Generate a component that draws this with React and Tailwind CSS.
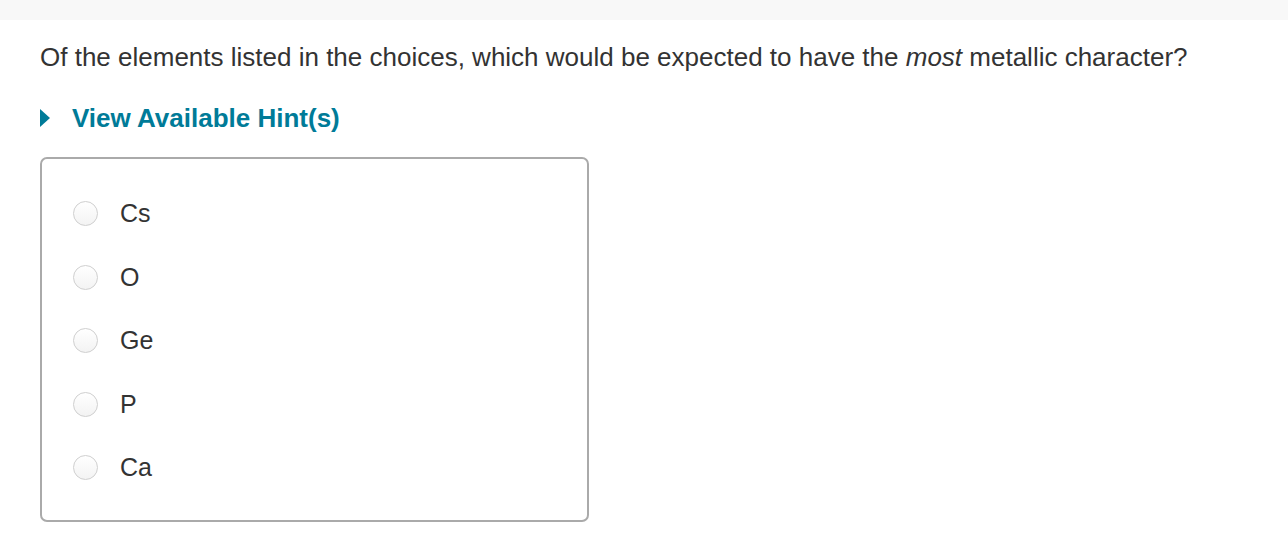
export default function App() {
  const choices = ["Cs", "O", "Ge", "P", "Ca"];

  return (
    <div className="w-[1288px] h-[534px] bg-white text-[#333] font-['Liberation_Sans',Arial,sans-serif]">
      <div className="h-[20px] bg-[#f8f8f8]" />

      <div className="pl-[40px] pt-[20px]">
        <p className="text-[26px] leading-[34px]">
          Of the elements listed in the choices, which would be expected to have the <i>most</i> metallic character?
        </p>

        {/* Hint toggle */}
        <div className="flex items-center mt-[27px] h-[34px]">
          <span className="w-0 h-0 border-y-[9px] border-y-transparent border-l-[10px] border-l-[#007b98] mr-[22px]" />
          <span className="text-[26px] font-bold text-[#007b98]">View Available Hint(s)</span>
        </div>

        {/* Choices */}
        <div className="mt-[22px] w-[549px] h-[365px] border-2 border-[#aaa] rounded-[7px] pt-[23px] pl-[31px]">
          {choices.map((c) => (
            <label key={c} className="flex items-center h-[63.5px]">
              <span className="w-[25px] h-[25px] rounded-full border border-[#cfcfcf] bg-gradient-to-b from-white to-[#f3f3f3]" />
              <span className="ml-[22px] text-[25px]">{c}</span>
            </label>
          ))}
        </div>
      </div>
    </div>
  );
}
